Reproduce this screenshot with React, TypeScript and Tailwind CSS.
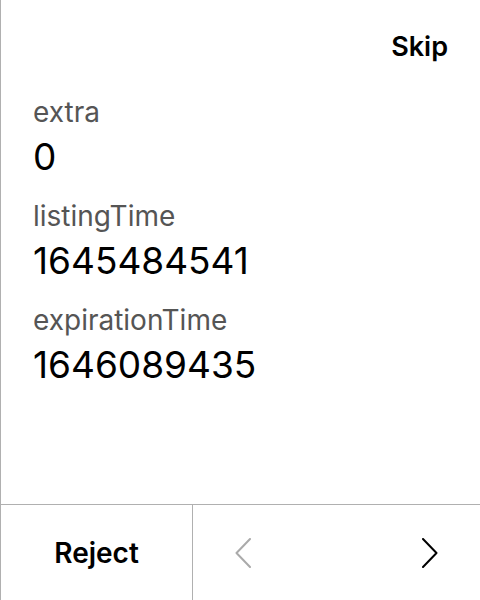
const fields = [
  { label: "extra", value: "0" },
  { label: "listingTime", value: "1645484541" },
  { label: "expirationTime", value: "1646089435" },
]

function Chevron({ dir, className }: { dir: "left" | "right"; className?: string }) {
  return (
    <svg width="16" height="30" viewBox="0 0 16 30" fill="none" className={className}>
      <path
        d={dir === "left" ? "M15 1 L1.5 15 L15 29" : "M1 1 L14.5 15 L1 29"}
        stroke="currentColor"
        strokeWidth="2"
        strokeLinecap="round"
        strokeLinejoin="round"
      />
    </svg>
  )
}

export default function App() {
  return (
    <main
      className="h-[600px] w-[480px] flex flex-col bg-white border-l border-[#b0b0b0] text-black"
      style={{ fontFamily: "Inter, 'Liberation Sans', sans-serif" }}
    >
      {/* Header */}
      <div className="flex justify-end pt-[30px] pr-[32px]">
        <button className="text-[27px] font-semibold leading-[34px]">Skip</button>
      </div>

      {/* Fields */}
      <div className="flex-1 flex flex-col gap-[14px] pl-[32px] pt-[30px]">
        {fields.map((f) => (
          <div key={f.label} className="flex flex-col">
            <span className="text-[28px] leading-[36px] text-[#555]">{f.label}</span>
            <span className="text-[37px] leading-[54px]">{f.value}</span>
          </div>
        ))}
      </div>

      {/* Footer */}
      <div className="h-[96px] flex border-t border-[#b0b0b0]">
        <button className="w-[192px] flex items-center justify-center text-[28px] font-semibold border-r border-[#b0b0b0]">
          Reject
        </button>
        <div className="flex-1 flex items-center justify-between pl-[42px] pr-[42px]">
          <Chevron dir="left" className="text-[#aaa]" />
          <Chevron dir="right" className="text-black" />
        </div>
      </div>
    </main>
  )
}
